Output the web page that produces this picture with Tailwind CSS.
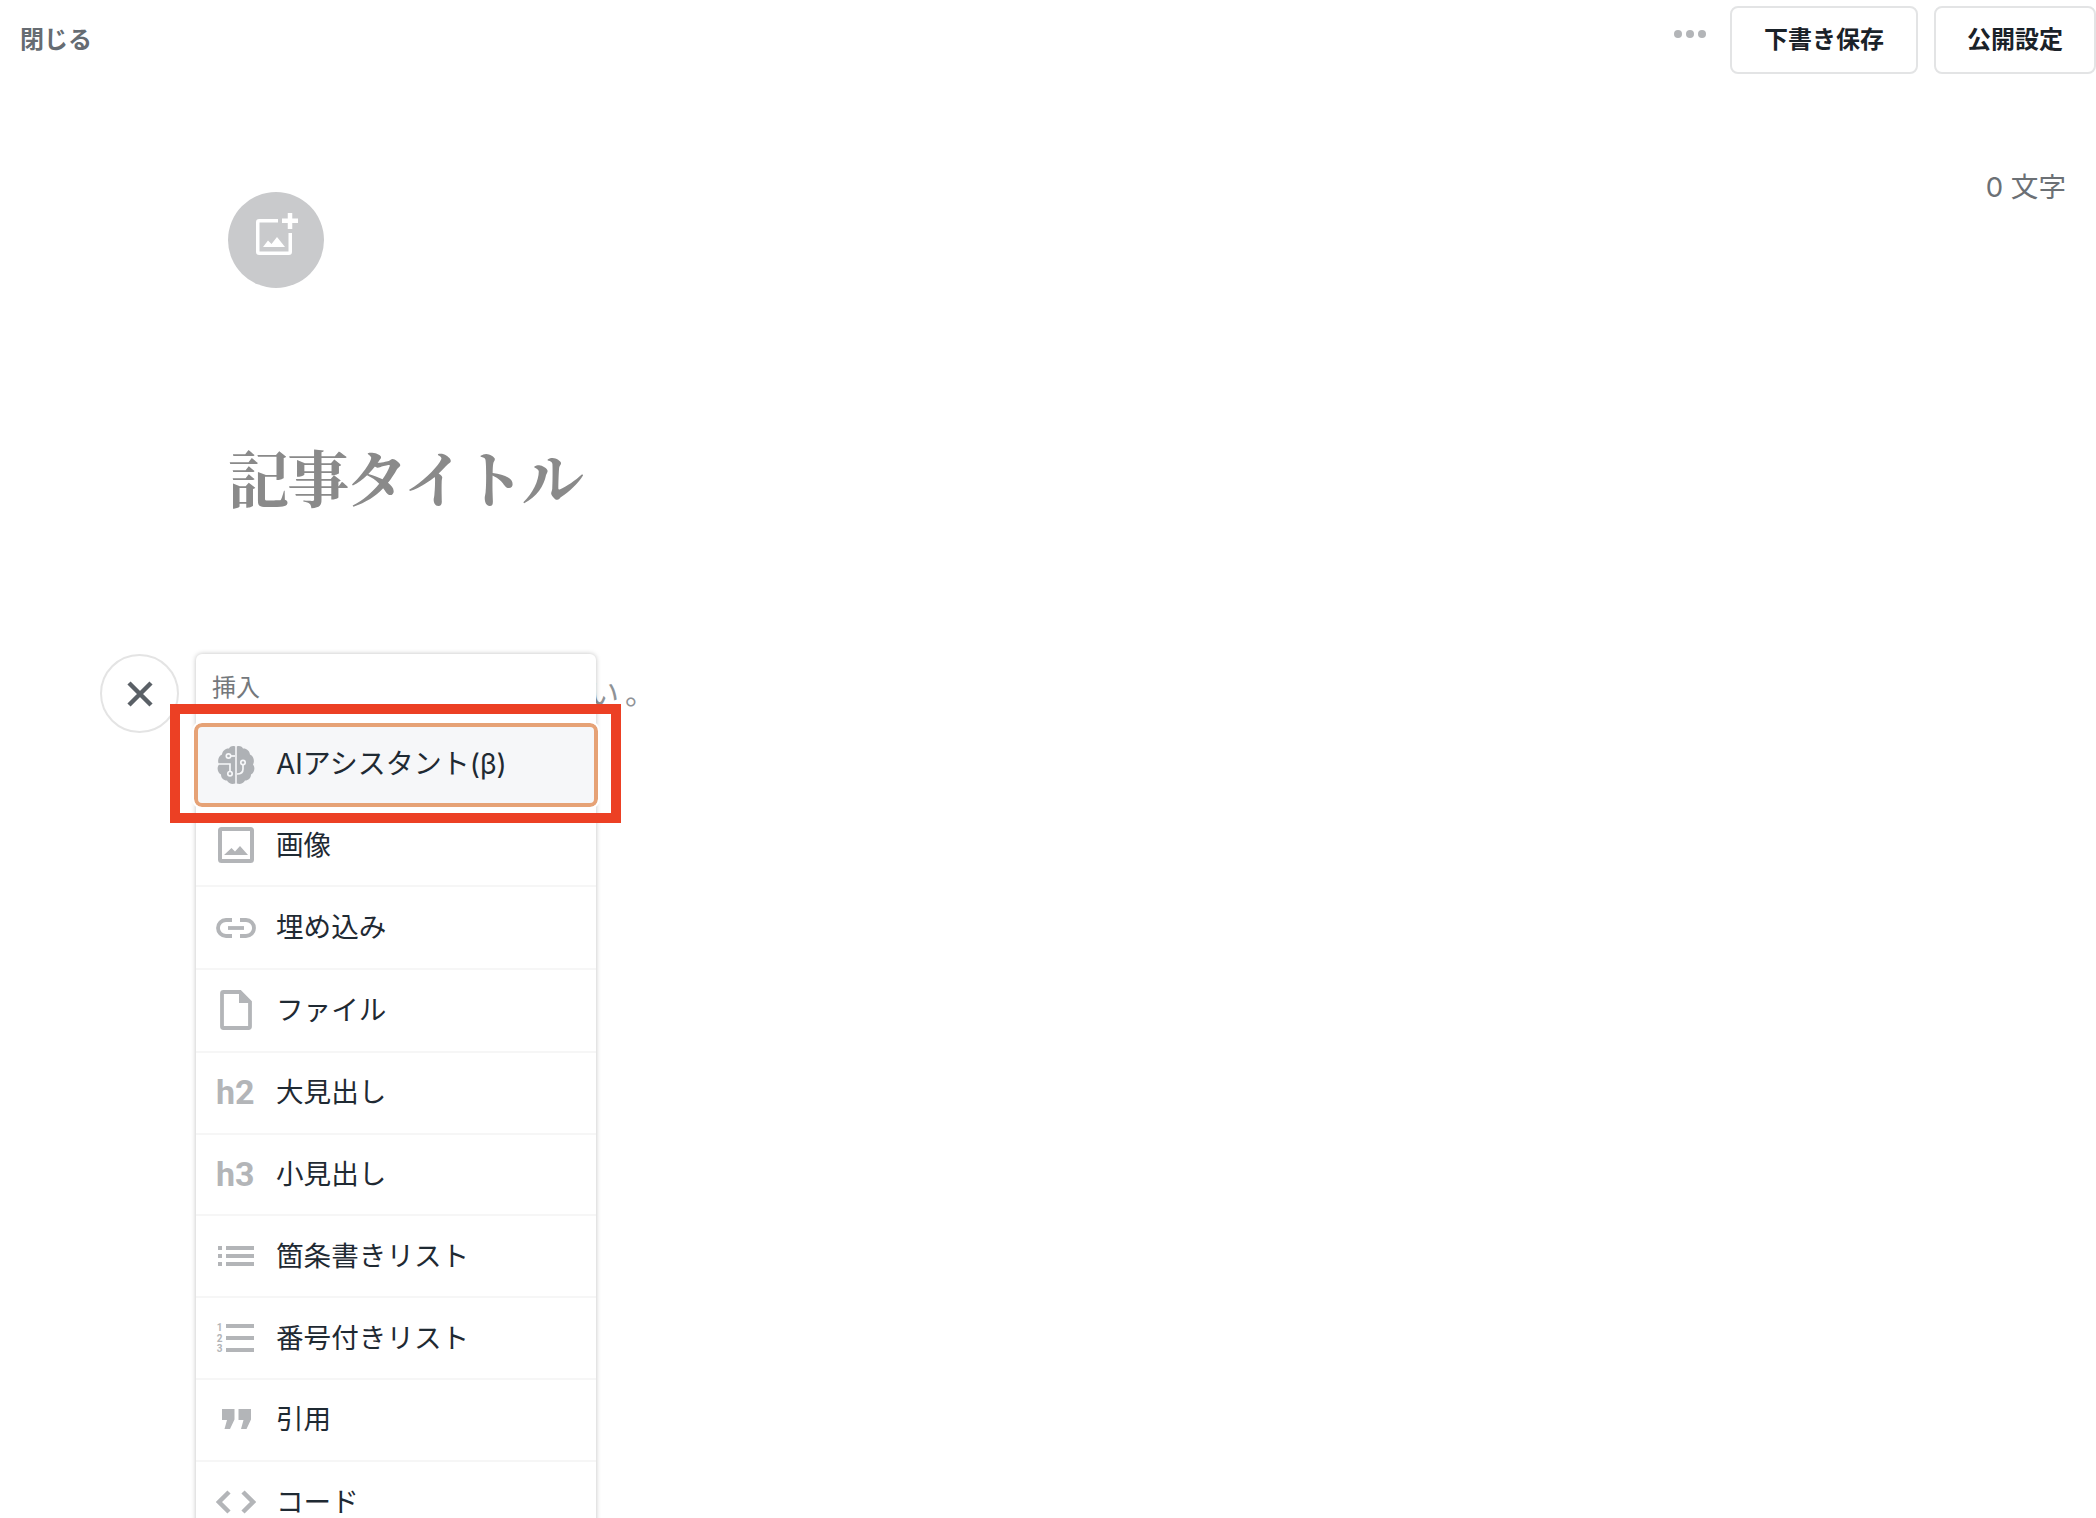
<!DOCTYPE html>
<html lang="ja">
<head>
<meta charset="utf-8">
<script src="https://cdn.jsdelivr.net/npm/@tailwindcss/browser@4"></script>
<title>記事</title>
</head>
<body class="bg-white">
<div class="relative w-[2096px] h-[1518px] overflow-hidden bg-white font-['Inter','Noto_Sans_CJK_JP',sans-serif] text-[#1f2a33]">

  <header class="flex items-center justify-between h-[68px] mt-[6px]">
    <span class="pl-[20px] text-[24px] leading-[32px] font-semibold text-[#666c72]">閉じる</span>
    <div class="flex items-center">
      <div class="flex gap-[4px] mr-[24px] mb-[12px]">
        <span class="w-[8px] h-[8px] rounded-full bg-[#b3b5b8]"></span>
        <span class="w-[8px] h-[8px] rounded-full bg-[#b3b5b8]"></span>
        <span class="w-[8px] h-[8px] rounded-full bg-[#b3b5b8]"></span>
      </div>
      <button class="w-[188px] h-[68px] border-2 border-[#e3e4e5] rounded-[8px] text-[24px] font-semibold text-[#1a2229]">下書き保存</button>
      <button class="ml-[16px] w-[162px] h-[68px] border-2 border-[#e3e4e5] rounded-[8px] text-[24px] font-semibold text-[#1a2229]">公開設定</button>
    </div>
  </header>

  <main class="flex justify-between pl-[228px] pr-[30px] pt-[92px]">
    <div>
      <div class="w-[96px] h-[96px] mt-[26px] rounded-full bg-[#c9cacc] flex items-center justify-center">
        <svg class="mb-[12px]" width="44" height="44" viewBox="0 0 44 44" fill="none">
          <path d="M24 8.750H5.250A1.500 1.500 0 0 0 3.750 10.250V39.750A1.500 1.500 0 0 0 5.250 41.250H34.750A1.500 1.500 0 0 0 36.250 39.750V21" stroke="#fff" stroke-width="3.500"/>
          <path d="M36 1V17M28 8.750H44" stroke="#fff" stroke-width="4.500"/>
          <path d="M9 35L14 28.500L17.500 32L23 25L31 35Z" fill="#fff"/>
        </svg>
      </div>
      <h1 class="mt-[147px] text-[62px] leading-[84px] tracking-[-3px] font-bold text-[#8a8a8a] font-['Noto_Serif_CJK_JP','Noto_Sans_CJK_JP',serif]">記事タイトル</h1>
      <p class="mt-[154px] ml-[1px] text-[30px] leading-[40px] tracking-[6px] text-[#8f9296] whitespace-nowrap">ご自由にお書きください。</p>
    </div>
    <div class="pt-[1px] text-[27.6px] leading-[40px] text-[#6b7075]">0 文字</div>
  </main>

  <div class="absolute left-[100px] top-[654px] w-[79px] h-[79px] rounded-full border-2 border-[#e4e4e4] bg-white flex items-center justify-center">
    <svg width="28" height="28" viewBox="0 0 28 28" fill="none"><path d="M3 3L25 25M25 3L3 25" stroke="#5a6066" stroke-width="4.500"/></svg>
  </div>

  <div class="absolute left-[196px] top-[654px] w-[400px] bg-white rounded-t-[6px] shadow-[0_0_5px_rgba(0,0,0,0.25)]">
    <div class="h-[69px] pl-[16px] pt-[18px] text-[24px] leading-[32px] text-[#74787c]">挿入</div>

    <div class="flex items-center h-[84px] -mx-[2px] border-[4px] border-[#e6a276] rounded-[8px] bg-[#f6f7f9] outline-2 outline-white">
      <div class="w-[61px] pl-[18px] shrink-0">
        <svg class="block" width="40" height="40" viewBox="0 0 40 40">
          <path d="M19.200 1.500V38.500C16 39.500 12.500 38.500 11 35.500C7.500 35.500 5 33 5 29.500C1.500 27.500 .5 22.500 3 19.500C1 16 2.500 11 6 9.500C6.500 5.500 10 3 13 3.500C14.500 1 17 .5 19.200 1.500Z" fill="#aeb1b5"/>
          <path d="M20.800 1.500V38.500C24 39.500 27.500 38.500 29 35.500C32.500 35.500 35 33 35 29.500C38.500 27.500 39.500 22.500 37 19.500C39 16 37.500 11 34 9.500C33.500 5.500 30 3 27 3.500C25.500 1 23 .5 20.800 1.500Z" fill="#aeb1b5"/>
          <g fill="none" stroke="#f6f7f9" stroke-width="1.700">
            <circle cx="12.500" cy="11" r="2.200"/><path d="M14.700 11H19"/>
            <path d="M2 19H14V26.500"/><circle cx="14" cy="28.700" r="2.200"/>
            <circle cx="27" cy="17.500" r="2.200"/><path d="M27 19.700V24C27 27 25 29 21 29"/>
          </g>
        </svg>
      </div>
      <span class="pl-[17px] pb-[2px] text-[28px] leading-[40px]">AIアシスタント(β)</span>
    </div>

    <div class="flex items-center h-[82px] border-b-2 border-[#f6f6f6] -mt-[2px]">
      <div class="w-[80px] pl-[22px] shrink-0">
        <svg class="block" width="36" height="36" viewBox="0 0 36 36" fill="none">
          <rect x="2" y="2" width="32" height="32" rx="1.500" stroke="#b3b5b8" stroke-width="4"/>
          <path d="M6 28L13.500 21L17 24.500L22 19L30 28Z" fill="#b3b5b8"/>
        </svg>
      </div>
      <span class="text-[27.6px] leading-[40px]">画像</span>
    </div>

    <div class="flex items-center h-[83px] border-b-2 border-[#f6f6f6]">
      <div class="w-[80px] pl-[20px] shrink-0">
        <svg class="block" width="40" height="20" viewBox="0 0 40 20" fill="none">
          <path d="M16 2H10C5.500 2 2 5.500 2 10S5.500 18 10 18H16M24 2H30C34.500 2 38 5.500 38 10S34.500 18 30 18H24" stroke="#b3b5b8" stroke-width="3.800"/>
          <path d="M12 10H28" stroke="#b3b5b8" stroke-width="3.800"/>
        </svg>
      </div>
      <span class="pb-[1px] text-[27.6px] leading-[40px]">埋め込み</span>
    </div>

    <div class="flex items-center h-[83px] border-b-2 border-[#f6f6f6] pb-[2px]">
      <div class="w-[80px] pl-[24px] shrink-0">
        <svg class="block" width="32" height="40" viewBox="0 0 32 40" fill="none">
          <path d="M2 3.500A1.500 1.500 0 0 1 3.500 2H20L30 12V36.500A1.500 1.500 0 0 1 28.500 38H3.500A1.500 1.500 0 0 1 2 36.500Z" stroke="#b3b5b8" stroke-width="3.800"/>
          <path d="M19 2V13H30Z" fill="#b3b5b8"/>
        </svg>
      </div>
      <span class="text-[27.6px] leading-[40px]">ファイル</span>
    </div>

    <div class="flex items-center h-[82px] border-b-2 border-[#f6f6f6] pb-[2px]">
      <div class="w-[80px] pl-[20px] shrink-0 font-['Roboto',sans-serif] font-bold text-[34px] leading-[40px] text-[#b3b5b8]">h2</div>
      <span class="text-[27.6px] leading-[40px]">大見出し</span>
    </div>

    <div class="flex items-center h-[81px] border-b-2 border-[#f6f6f6] pb-[2px]">
      <div class="w-[80px] pl-[20px] shrink-0 font-['Roboto',sans-serif] font-bold text-[34px] leading-[40px] text-[#b3b5b8]">h3</div>
      <span class="text-[27.6px] leading-[40px]">小見出し</span>
    </div>

    <div class="flex items-center h-[82px] border-b-2 border-[#f6f6f6]">
      <div class="w-[80px] pl-[22px] shrink-0">
        <svg class="block" width="36" height="22" viewBox="0 0 36 22" fill="#b3b5b8">
          <rect x="0" y="1" width="4" height="4"/><rect x="8" y="1" width="28" height="4"/>
          <rect x="0" y="9" width="4" height="4"/><rect x="8" y="9" width="28" height="4"/>
          <rect x="0" y="17" width="4" height="4"/><rect x="8" y="17" width="28" height="4"/>
        </svg>
      </div>
      <span class="text-[27.6px] leading-[40px]">箇条書きリスト</span>
    </div>

    <div class="flex items-center h-[82px] border-b-2 border-[#f6f6f6]">
      <div class="w-[80px] pl-[20px] shrink-0 flex gap-[3px]">
        <div class="w-[7px] flex flex-col justify-between items-center h-[30px] font-['Roboto',sans-serif] font-bold text-[10px] leading-[9px] text-[#b3b5b8]"><span>1</span><span>2</span><span>3</span></div>
        <div class="w-[28px] h-[30px] flex flex-col justify-between py-[1px]">
          <span class="block h-[4px] bg-[#b3b5b8]"></span>
          <span class="block h-[4px] bg-[#b3b5b8]"></span>
          <span class="block h-[4px] bg-[#b3b5b8]"></span>
        </div>
      </div>
      <span class="text-[27.6px] leading-[40px]">番号付きリスト</span>
    </div>

    <div class="flex items-center h-[82px] border-b-2 border-[#f6f6f6] pb-[2px]">
      <div class="w-[80px] pl-[26px] shrink-0">
        <svg class="block" width="29" height="20" viewBox="0 0 29 20" fill="#b3b5b8">
          <path d="M0 0H12.500V10.500L8 20H2.500L5 11H0Z"/>
          <path d="M16.500 0H29V10.500L24.500 20H19L21.500 11H16.500Z"/>
        </svg>
      </div>
      <span class="text-[27.6px] leading-[40px]">引用</span>
    </div>

    <div class="flex items-center h-[80px]">
      <div class="w-[80px] pl-[20px] shrink-0">
        <svg class="block" width="40" height="24" viewBox="0 0 40 24" fill="none" stroke="#b3b5b8" stroke-width="4.500">
          <path d="M13 2L3 12L13 22M27 2L37 12L27 22"/>
        </svg>
      </div>
      <span class="text-[27.6px] leading-[40px]">コード</span>
    </div>
  </div>

  <div class="absolute left-[170px] top-[704px] w-[451px] h-[119px] border-[10px] border-[#ec4024] pointer-events-none"></div>
</div>
</body>
</html>
